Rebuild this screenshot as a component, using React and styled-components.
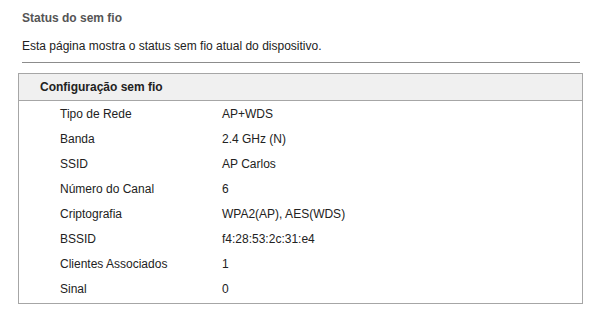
import React from "react";
import styled, { createGlobalStyle } from "styled-components";

const GlobalStyle = createGlobalStyle`
  body {
    margin: 0;
    background: #ffffff;
    font-family: "Liberation Sans", Arial, Helvetica, sans-serif;
    font-size: 12px;
    color: #222;
  }
`;

const Page = styled.div`
  width: 595px;
  padding-top: 11px;
`;

const Title = styled.h2`
  margin: 0 0 0 22px;
  font-size: 12px;
  line-height: 14px;
  font-weight: bold;
  color: #555;
`;

const Description = styled.p`
  margin: 14px 0 0 22px;
  line-height: 14px;
  color: #222;
`;

const Divider = styled.hr`
  margin: 9px 15px 0 22px;
  border: 0;
  border-top: 1px solid #8c8c8c;
  height: 0;
`;

const Panel = styled.section`
  margin: 10px 12px 0 18px;
  border: 1px solid #a6a6a6;
  padding-bottom: 2px;
`;

const PanelHeader = styled.div`
  height: 26px;
  display: flex;
  align-items: center;
  padding-left: 21px;
  background: #f0f0f0;
  border-bottom: 1px solid #a6a6a6;
  font-weight: bold;
  color: #222;
`;

const Row = styled.div`
  display: grid;
  grid-template-columns: 162px 1fr;
  height: 25px;
  align-items: center;
  padding-left: 41px;
`;

const Label = styled.span`
  color: #222;
`;

const Value = styled.span`
  color: #222;
`;

const rows = [
  ["Tipo de Rede", "AP+WDS"],
  ["Banda", "2.4 GHz (N)"],
  ["SSID", "AP Carlos"],
  ["Número do Canal", "6"],
  ["Criptografia", "WPA2(AP), AES(WDS)"],
  ["BSSID", "f4:28:53:2c:31:e4"],
  ["Clientes Associados", "1"],
  ["Sinal", "0"],
];

export default function App() {
  return (
    <>
      <GlobalStyle />
      <Page>
        <Title>Status do sem fio</Title>
        <Description>
          Esta página mostra o status sem fio atual do dispositivo.
        </Description>
        <Divider />
        <Panel>
          <PanelHeader>Configuração sem fio</PanelHeader>
          {rows.map(([label, value]) => (
            <Row key={label}>
              <Label>{label}</Label>
              <Value>{value}</Value>
            </Row>
          ))}
        </Panel>
      </Page>
    </>
  );
}
